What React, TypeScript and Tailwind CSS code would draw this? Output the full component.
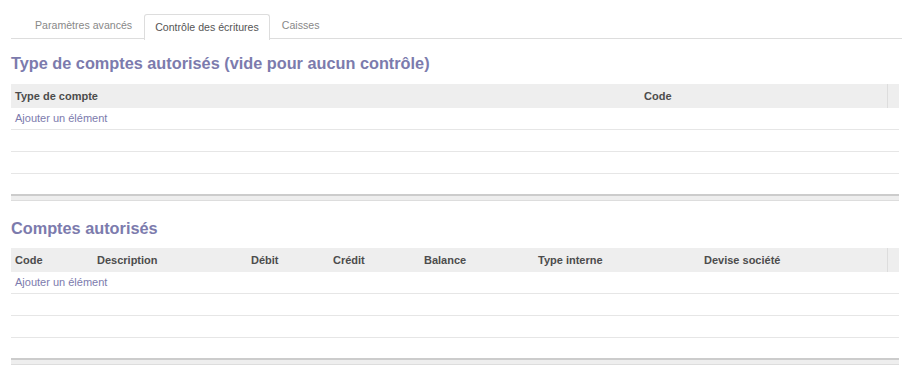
import React from "react";

const font = { fontFamily: '"Liberation Sans", Arial, sans-serif' };

type Col = { label: string; w: string };

const accountTypeCols: Col[] = [
  { label: "Type de compte", w: "w-[629px]" },
  { label: "Code", w: "w-[247px]" },
];

const accountCols: Col[] = [
  { label: "Code", w: "w-[82px]" },
  { label: "Description", w: "w-[154px]" },
  { label: "Débit", w: "w-[82px]" },
  { label: "Crédit", w: "w-[91px]" },
  { label: "Balance", w: "w-[114px]" },
  { label: "Type interne", w: "w-[166px]" },
  { label: "Devise société", w: "w-[187px]" },
];

function Tabs() {
  const tabs = ["Paramètres avancés", "Contrôle des écritures", "Caisses"];
  return (
    <div className="flex h-[25px] border-b border-[#dddddd] pl-[14px]">
      {tabs.map((t, i) =>
        i === 1 ? (
          <div
            key={t}
            className="mr-[2px] -mb-px flex h-[26px] items-center rounded-t-[3px] border border-b-0 border-[#dddddd] bg-white px-[10px] text-[10.6px] text-[#555555]"
          >
            {t}
          </div>
        ) : (
          <div key={t} className="mr-[2px] flex items-center px-[10px] text-[10.6px] text-[#888888]">
            {t}
          </div>
        )
      )}
    </div>
  );
}

function ListTable({ cols }: { cols: Col[] }) {
  return (
    <div className="w-[888px]">
      <div className="flex h-[24px] bg-[#eeeeee]">
        {cols.map((c) => (
          <div key={c.label} className={`${c.w} flex items-center px-[4px] text-[11px] font-bold text-[#4c4c4c]`}>
            {c.label}
          </div>
        ))}
        <div className="flex-1 border-l border-[#dddddd]" />
      </div>
      <div className="flex h-[22px] items-center border-b border-[#e6e6e6] px-[4px] text-[11px] text-[#7c7bad]">
        Ajouter un élément
      </div>
      <div className="h-[22px] border-b border-[#e6e6e6]" />
      <div className="h-[22px] border-b border-[#e6e6e6]" />
      <div className="h-[20px]" />
      <div className="h-[7px] border-t-2 border-b border-t-[#cccccc] border-b-[#dddddd] bg-[#eeeeee]" />
    </div>
  );
}

export default function App() {
  return (
    <div className="h-[375px] w-[913px] overflow-hidden bg-white px-[11px] pt-[14px]" style={font}>
      <Tabs />
      <h2 className="mt-[13px] mb-[10px] text-[16.3px] leading-[22px] font-bold text-[#7c7bad]">
        Type de comptes autorisés (vide pour aucun contrôle)
      </h2>
      <ListTable cols={accountTypeCols} />
      <h2 className="mt-[16px] mb-[9px] text-[16.3px] leading-[22px] font-bold text-[#7c7bad]">
        Comptes autorisés
      </h2>
      <ListTable cols={accountCols} />
    </div>
  );
}
